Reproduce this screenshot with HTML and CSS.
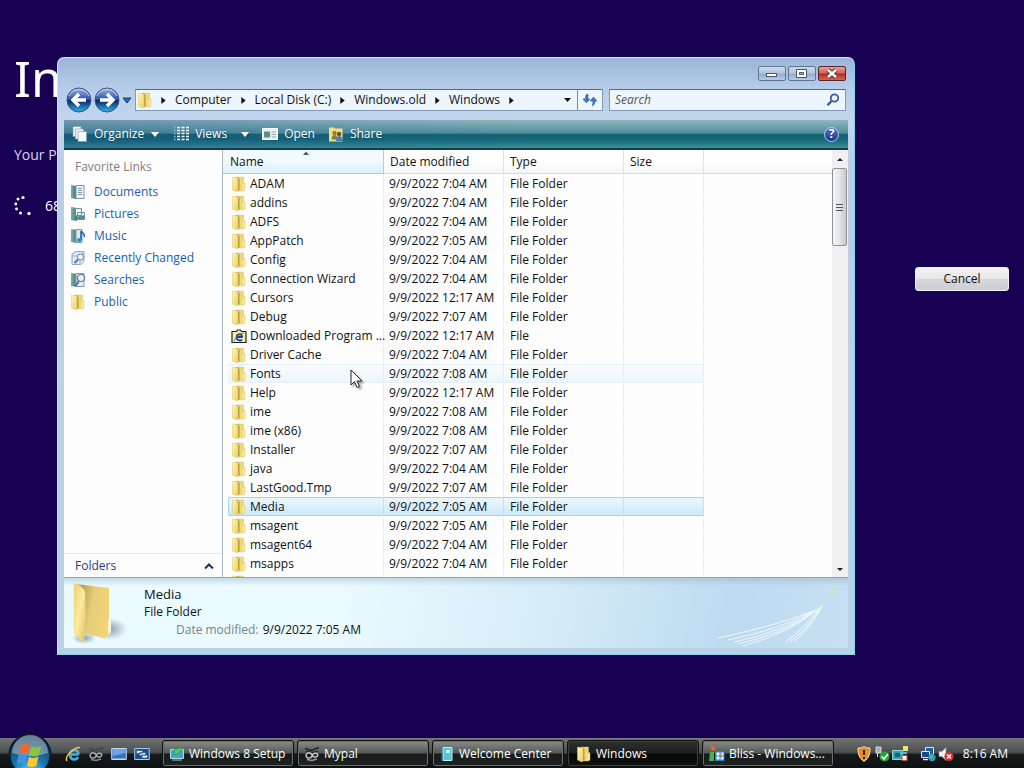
FILE: index.html
```html
<!DOCTYPE html>
<html lang="en">
<head>
    <meta charset="UTF-8">
    <title>Windows</title>
    <link rel="stylesheet" href="styles.css">
</head>
<body>
    <!-- Shared icons -->
    <svg class="sprite" aria-hidden="true">
        <defs>
            <linearGradient id="folderFront" x1="0" y1="0" x2="1" y2="1">
                <stop offset="0" stop-color="#fdf6bc"/>
                <stop offset="1" stop-color="#ead05c"/>
            </linearGradient>
            <linearGradient id="folderBack" x1="0" y1="0" x2="1" y2="0">
                <stop offset="0" stop-color="#bd9a34"/>
                <stop offset="0.5" stop-color="#f0db7c"/>
                <stop offset="1" stop-color="#e6cc5c"/>
            </linearGradient>
            <linearGradient id="orbBlue" x1="0" y1="0" x2="0" y2="1">
                <stop offset="0" stop-color="#9db4e4"/>
                <stop offset="0.48" stop-color="#2c53a8"/>
                <stop offset="0.5" stop-color="#06215f"/>
                <stop offset="1" stop-color="#2fb4f2"/>
            </linearGradient>
            <linearGradient id="book" x1="0" y1="0" x2="1" y2="0">
                <stop offset="0" stop-color="#7fb0a8"/>
                <stop offset="1" stop-color="#3c7875"/>
            </linearGradient>
        </defs>
        <symbol id="icon-folder" viewBox="0 0 16 16">
            <path d="M5 1h7.500v5l1.500 1v7l-1.500 1H5z" fill="url(#folderBack)" stroke="#dcc371" stroke-width=".4"/>
            <path d="M1.500 1L6.500 2l.8 5v7.500L6 16l-4.500-2z" fill="url(#folderFront)" stroke="#e0c867" stroke-width=".5"/>
            <path d="M11.500 7.500h2v6l-2 1z" fill="#f8edae"/>
            <path d="M7.800 3v11.500" stroke="#b9973a" stroke-width="1.200"/>
        </symbol>
        <symbol id="icon-ie" viewBox="0 0 16 16">
            <path d="M1 3.500h4.500l1-1.500h3l1 1.500h4.500v11H1z" fill="#f4f09a" stroke="#222" stroke-width="1.200"/>
            <path d="M11.500 9H5.500M11 11.500c-1 1.600-5 1.500-5.300-2C5.500 5.500 11 5 11.300 9" fill="none" stroke="#1d3f9a" stroke-width="1.800"/>
            <path d="M3.500 13C3.500 10 9 5 13 5" fill="none" stroke="#4d78c8"/>
        </symbol>
        <symbol id="icon-arrow" viewBox="0 0 5 8"><path d="M0 0l5 4-5 4z" fill="#111"/></symbol>
    </svg>

    <main class="desktop">
        <section class="setup">
            <h1 class="setup-title">In</h1>
            <p class="setup-text">Your P</p>
            <p class="setup-progress">
                <svg width="22" height="22" viewBox="0 0 22 22" fill="#fff">
                    <circle cx="9" cy="2.500" r="1.600"/><circle cx="4" cy="4" r="1.500"/><circle cx="1.800" cy="9" r="1.400"/>
                    <circle cx="2.500" cy="14" r="1.400"/><circle cx="6.500" cy="18" r="1.500"/><circle cx="15" cy="18.500" r="1.700"/>
                </svg>
                <span>68</span>
            </p>
            <div class="setup-actions">
                <button type="button" class="cancel">Cancel</button>
            </div>
        </section>

        <section class="window">
            <div class="caption">
                <button type="button" class="caption-btn" aria-label="Minimize">
                    <svg width="26" height="13" viewBox="0 0 26 13"><rect x="7.500" y="6.500" width="10" height="3" fill="#fff" stroke="#4b5570"/></svg>
                </button>
                <button type="button" class="caption-btn" aria-label="Maximize">
                    <svg width="26" height="13" viewBox="0 0 26 13"><path d="M7.500 2.500h10v8h-10zM10.500 5.500v2h4v-2z" fill="#fff" fill-rule="evenodd" stroke="#4b5570"/></svg>
                </button>
                <button type="button" class="caption-btn close" aria-label="Close">
                    <svg width="26" height="13" viewBox="0 0 26 13" fill="none"><path d="M9 3l8 7M17 3l-8 7" stroke="#5d2c34" stroke-width="4.500"/><path d="M9 3l8 7M17 3l-8 7" stroke="#fff" stroke-width="2.500"/></svg>
                </button>
            </div>

            <div class="nav">
                <div class="travel">
                    <button type="button" aria-label="Back">
                        <svg width="26" height="26" viewBox="0 0 26 26"><circle cx="13" cy="13" r="12" fill="url(#orbBlue)" stroke="#3a5484"/><path d="M3 9a11 11 0 0 1 20 0" fill="none" stroke="#d6e2f8" stroke-opacity=".8"/><path d="M20 13H8M13 7l-6 6 6 6" fill="none" stroke="#fff" stroke-width="3.400"/></svg>
                    </button>
                    <button type="button" aria-label="Forward">
                        <svg width="26" height="26" viewBox="0 0 26 26"><circle cx="13" cy="13" r="12" fill="url(#orbBlue)" stroke="#3a5484"/><path d="M3 9a11 11 0 0 1 20 0" fill="none" stroke="#d6e2f8" stroke-opacity=".8"/><path d="M6 13h12M13 7l6 6-6 6" fill="none" stroke="#fff" stroke-width="3.400"/></svg>
                    </button>
                    <button type="button" aria-label="Recent pages">
                        <svg width="10" height="7" viewBox="0 0 10 7"><path d="M1 1h8L5 6z" fill="#2d6db0" stroke="#1c3866"/></svg>
                    </button>
                </div>
                <div class="address">
                    <svg class="icon"><use href="#icon-folder"/></svg>
                    <svg class="sep"><use href="#icon-arrow"/></svg>
                    <a href="#">Computer</a>
                    <svg class="sep"><use href="#icon-arrow"/></svg>
                    <a href="#">Local Disk (C:)</a>
                    <svg class="sep"><use href="#icon-arrow"/></svg>
                    <a href="#">Windows.old</a>
                    <svg class="sep"><use href="#icon-arrow"/></svg>
                    <a href="#">Windows</a>
                    <svg class="sep"><use href="#icon-arrow"/></svg>
                    <button type="button" class="address-drop" aria-label="Previous locations">
                        <svg width="7" height="4" viewBox="0 0 7 4"><path d="M0 0h7L3.500 4z" fill="#111"/></svg>
                    </button>
                    <button type="button" class="refresh" aria-label="Refresh">
                        <svg width="16" height="16" viewBox="0 0 16 16" fill="#3e78b8" stroke="#24538a" stroke-width=".5"><path d="M4 3l2-1v5h2L4.500 11 1 7h2z"/><path d="M11.500 5L15 9h-2c0 3-1 4-3 5 1-1.500 1-3 .8-5H8z"/></svg>
                    </button>
                </div>
                <div class="search">
                    <input type="search" placeholder="Search" aria-label="Search">
                    <svg width="14" height="14" viewBox="0 0 14 14" fill="none" stroke="#3d5ba5"><circle cx="8.500" cy="5" r="3.700" stroke-width="1.800"/><path d="M5.500 8L1.500 12.300" stroke-width="2.400"/></svg>
                </div>
            </div>

            <div class="toolbar">
                <button type="button" class="tool organize">
                    <svg class="icon" viewBox="0 0 16 16" fill="#f4f8fa" stroke="#7fa2ae" stroke-width=".7"><path d="M1 .5h8v10H1z"/><path d="M3.500 3h8v10h-8z"/><path d="M6 5.500h8.500v10H6z"/></svg>
                    Organize
                    <svg class="drop" width="8" height="5" viewBox="0 0 8 5"><path d="M0 0h8L4 5z" fill="#fff"/></svg>
                </button>
                <button type="button" class="tool views">
                    <svg class="icon" viewBox="0 0 16 16"><path d="M4 1.500h3M8.500 1.500h3M13 1.500h3M4 4.500h3M8.500 4.500h3M13 4.500h3M4 7.500h3M8.500 7.500h3M13 7.500h3M4 10.500h3M8.500 10.500h3M13 10.500h3M4 13.500h3M8.500 13.500h3M13 13.500h3" stroke="#fff" stroke-width="1.600"/><path d="M1 1.500h1.500M1 4.500h1.500M1 7.500h1.500M1 10.500h1.500M1 13.500h1.500" stroke="#8ac0f0" stroke-width="1.600"/></svg>
                    Views
                    <svg class="drop" width="8" height="5" viewBox="0 0 8 5"><path d="M0 0h8L4 5z" fill="#fff"/></svg>
                </button>
                <button type="button" class="tool open">
                    <svg class="icon" viewBox="0 0 16 16"><path d="M.5 2.500h15v11H.5z" fill="#e9f1f3" stroke="#fff"/><path d="M2 5.500h6v6H2z" fill="#5f8d88"/><path d="M9.500 6h4.500M9.500 8.500h4.500M9.500 11h4.500" stroke="#93abb3"/></svg>
                    Open
                </button>
                <button type="button" class="tool share">
                    <svg class="icon" viewBox="0 0 16 16"><path d="M1 1.500h5l1 1h7.500v13H1z" fill="#f0de86"/><circle cx="6.500" cy="7" r="2.200" fill="#a8762e"/><path d="M3.500 13.500c0-3 1.500-4.500 3-4.500s3 1 3 4.500z" fill="#6a8a3b"/><circle cx="11" cy="8" r="2.200" fill="#7a4a20"/><path d="M8 15c.5-3 1.500-5 3-5s4 2 4 5z" fill="#4c7db3"/></svg>
                    Share
                </button>
                <button type="button" class="tool help" aria-label="Help">
                    <span>?</span>
                </button>
            </div>

            <div class="content">
                <aside class="sidebar">
                    <h2>Favorite Links</h2>
                    <ul>
                        <li><a href="#"><svg class="icon" viewBox="0 0 16 16"><path d="M1 1l5 1v13l-5-1z" fill="url(#book)"/><path d="M6 1.500h8v13H6z" fill="#eef3f6" stroke="#7d949e"/><path d="M8 4.500h4M8 6.500h4M8 8.500h4M8 10.500h4" stroke="#8296a8"/></svg>Documents</a></li>
                        <li><a href="#"><svg class="icon" viewBox="0 0 16 16"><path d="M1 1l6 1v13l-6-1z" fill="url(#book)"/><path d="M5.500 2.500h6v7h-6zM7.500 6.500h7v7h-7z" fill="#eef3f6" stroke="#71909e"/><path d="M8 11l2-2 2 1 2-1v4H8z" fill="#4a88a8"/></svg>Pictures</a></li>
                        <li><a href="#"><svg class="icon" viewBox="0 0 16 16"><path d="M1 1l6 1v13l-6-1z" fill="url(#book)"/><path d="M6 1.500h6v13H6z" fill="#dce9ed" stroke="#81999f"/><path d="M11 12V3c1 2 4 2 3.500 6" fill="none" stroke="#1766b8" stroke-width="1.600"/><ellipse cx="9.300" cy="12" rx="2.500" ry="2" fill="#2b8be0"/></svg>Music</a></li>
                        <li><a href="#"><svg class="icon" viewBox="0 0 16 16"><path d="M2 4l4-2.500h8V11l-3 3.500H2z" fill="#dce8f5" stroke="#8ba6c8"/><path d="M2 6h8v8M10 6l4-4" fill="none" stroke="#9db5d3"/><circle cx="10.500" cy="7" r="3" fill="#f5f9fd" stroke="#6686b6"/><path d="M8 9.500L4.500 13" stroke="#5274a8" stroke-width="1.800"/></svg>Recently Changed</a></li>
                        <li><a href="#"><svg class="icon" viewBox="0 0 16 16"><path d="M1 1l6 1v13l-6-1z" fill="url(#book)"/><path d="M6 1.500h8v13H6z" fill="#e6edf3" stroke="#8498a6"/><circle cx="11" cy="6" r="3.500" fill="#e8f1fb" stroke="#5d79a8" stroke-width="1.200"/><path d="M9 9l-3.500 5" stroke="#5571a2" stroke-width="2"/></svg>Searches</a></li>
                        <li><a href="#"><svg class="icon"><use href="#icon-folder"/></svg>Public</a></li>
                    </ul>
                    <button type="button" class="folders">
                        Folders
                        <svg width="10" height="6" viewBox="0 0 10 6"><path d="M1 5.500l4-4 4 4" fill="none" stroke="#1b2f66" stroke-width="2"/></svg>
                    </button>
                </aside>

                <div class="list">
                    <table>
                        <colgroup>
                            <col class="col-gutter"><col class="col-name"><col class="col-date"><col class="col-type"><col class="col-size"><col>
                        </colgroup>
                        <thead>
                            <tr>
                                <th colspan="2" class="sorted">Name<svg class="sort-mark" width="6" height="4" viewBox="0 0 6 4"><path d="M0 4l3-3.500L6 4z" fill="#4d5d68"/></svg></th>
                                <th>Date modified</th><th>Type</th><th>Size</th><th class="rest"></th>
                            </tr>
                        </thead>
                        <tbody id="files"></tbody>
                    </table>
                </div>

                <div class="scrollbar">
                    <button type="button" aria-label="Scroll up"><svg width="6" height="3" viewBox="0 0 6 3"><path d="M0 3l3-3 3 3z" fill="#222"/></svg></button>
                    <div class="thumb"><i></i><i></i><i></i></div>
                    <button type="button" class="down" aria-label="Scroll down"><svg width="6" height="3" viewBox="0 0 6 3"><path d="M0 0h6L3 3z" fill="#222"/></svg></button>
                </div>
            </div>

            <footer class="details">
                <svg class="details-icon" width="56" height="64" viewBox="0 0 56 64">
                    <defs>
                        <radialGradient id="softShadow"><stop offset="0" stop-color="#6f8494" stop-opacity=".8"/><stop offset="1" stop-color="#6f8494" stop-opacity="0"/></radialGradient>
                        <linearGradient id="bigBack" x1="0" y1="0" x2="1" y2=".3"><stop offset=".2" stop-color="#b7a25a"/><stop offset=".55" stop-color="#e6cd78"/><stop offset="1" stop-color="#efd576"/></linearGradient>
                        <linearGradient id="bigFront" x1="0" y1="0" x2="1" y2="1"><stop offset="0" stop-color="#e9cf73"/><stop offset=".5" stop-color="#fbeba2"/><stop offset="1" stop-color="#e3bf56"/></linearGradient>
                    </defs>
                    <ellipse cx="37" cy="47" rx="18" ry="11" fill="url(#softShadow)"/>
                    <ellipse cx="12" cy="56" rx="12" ry="6" fill="url(#softShadow)"/>
                    <path d="M4 2l33 4v47l-4 3-24-5z" fill="url(#bigBack)"/>
                    <path d="M36 38l3-1v13l-3 3z" fill="#fbf6d8"/>
                    <path d="M2 1c5 2 11 6 11 10v27l-1 3v20L2 51z" fill="url(#bigFront)" stroke="#f3dd8c" stroke-width=".6"/>
                </svg>
                <div class="details-text">
                    <p class="details-name">Media</p>
                    <p>File Folder</p>
                    <p class="details-date"><span>Date modified:</span> 9/9/2022 7:05 AM</p>
                </div>
                <svg class="details-art" width="130" height="68" viewBox="0 0 130 68" fill="none">
                    <path d="M4 58Q60 46 100 31M14 60Q65 50 102 30M20 62Q70 52 104 29M24 64Q74 53 106 28M28 66Q76 54 108 26" stroke="#fff" stroke-opacity=".75"/>
                    <path d="M72 62Q88 50 104 30M76 62Q92 50 106 29M80 62Q96 48 108 27" stroke="#fff" stroke-opacity=".8"/>
                    <path d="M98 34l12-11M116 12l7-4-2 4-5 4z" stroke="#c8f0a8" stroke-opacity=".8"/>
                </svg>
            </footer>
        </section>

        <svg class="cursor" width="14" height="20" viewBox="0 0 14 20"><path d="M1 1v15l3.500-3.500L7 18.500l2.500-1L7 12h5z" fill="#fff" stroke="#222"/></svg>
    </main>

    <nav class="taskbar">
        <button type="button" class="start" aria-label="Start">
            <svg width="44" height="44" viewBox="0 0 44 44">
                <defs><radialGradient id="startOrb" cx=".5" cy=".95" r=".9"><stop offset="0" stop-color="#5fe0ff"/><stop offset=".45" stop-color="#1a78ad"/><stop offset="1" stop-color="#12324e"/></radialGradient></defs>
                <circle cx="22" cy="22" r="20.500" fill="url(#startOrb)" stroke="#0b1a2c" stroke-width="2"/>
                <path d="M4 20a18 18 0 0 1 36 0q-18 6-36 0z" fill="#c3d0da" opacity=".5"/>
                <path d="M13 12q5-3 9 0l-2 9q-4-3-9 0z" fill="#ee6a2c"/>
                <path d="M23.500 13q4 3 9.500 0l-2 9q-5 3-9.500 0z" fill="#8cc63c"/>
                <path d="M10.500 22.500q5-3 9 0l-2 9q-4-3-9 0z" fill="#3f93e0"/>
                <path d="M21 23.500q4 3 9.500 0l-2 9q-5 3-9.500 0z" fill="#fbc92f"/>
            </svg>
        </button>
        <div class="quick">
            <button type="button" aria-label="Internet Explorer"><svg class="icon" viewBox="0 0 16 16" fill="none"><path d="M13.500 8.500H5M13 11c-2 4-8.500 3-8-3 .5-5.500 8.500-5 8.500.5" stroke="#3eb0f2" stroke-width="2.600"/><path d="M2 15C-1 11 9 1 15 1.500" stroke="#f5c534" stroke-width="1.500"/></svg></button>
            <button type="button" aria-label="Mypal"><svg class="icon" viewBox="0 0 16 16" fill="none"><path d="M1 2.500l6 2 8-3M2 5.500l6 1 6-1" stroke="#3c4346" stroke-width="1.600"/><path d="M2 9c1-3 5-3 6 0s5 3 6 0M2 9c0 4 5 4 6 1s5-4 6-1" stroke="#a9b0b2" stroke-width="1.400"/><path d="M3 13.500l5 1 5-1.500" stroke="#83898c" stroke-width="1.500"/></svg></button>
            <button type="button" aria-label="Show desktop"><svg class="icon" viewBox="0 0 16 16"><path d="M.7 2.500h14.600v11H.7z" fill="#3b6fc4" stroke="#c6d8ec"/><path d="M1.500 3h13v4l-13 3z" fill="#6fa3e8"/><path d="M1.500 12.500h13" stroke="#7ba7cb"/></svg></button>
            <button type="button" aria-label="Switch windows"><svg class="icon" viewBox="0 0 16 16"><path d="M.7 2.500h14.600v11H.7z" fill="#1d4d91" stroke="#a9c8ea"/><path d="M2.500 4.500h6v3h-6zM5.500 6.500h6v3h-6zM8 9h5.500v3H8z" fill="#e6f0fa" stroke="#2a5790" stroke-width=".7"/></svg></button>
        </div>
        <div class="tasks">
            <button type="button" class="task"><svg class="icon" viewBox="0 0 16 16"><path d="M1.500 3.500h13v9h-13z" fill="#4f9fc4" stroke="#a5dceb"/><path d="M3 14h10" stroke="#9cc4d0"/><path d="M12 1L7 4 6 2.500 4.500 8.500 11 8 9.500 6.500 13 3z" fill="#3ed668" stroke="#178a3f" stroke-width=".6"/></svg><span>Windows 8 Setup</span></button>
            <button type="button" class="task"><svg class="icon" viewBox="0 0 16 16" fill="none"><path d="M1 2.500l6 2 8-3M2 5.500l6 1 6-1" stroke="#20282c" stroke-width="1.600"/><path d="M2 9c1-3 5-3 6 0s5 3 6 0M2 9c0 4 5 4 6 1s5-4 6-1" stroke="#c9cfd1" stroke-width="1.400"/><path d="M3 13.500l5 1 5-1.500" stroke="#969c9f" stroke-width="1.500"/></svg><span>Mypal</span></button>
            <button type="button" class="task"><svg class="icon" viewBox="0 0 16 16"><path d="M4 1.500h9v13H4z" fill="#55c5d8" stroke="#b9eef4"/><path d="M7 4h4v3H7z" fill="#c6f4f8"/><path d="M3 2v13" stroke="#2c8e9e"/></svg><span>Welcome Center</span></button>
            <button type="button" class="task active"><svg class="icon"><use href="#icon-folder"/></svg><span>Windows</span></button>
            <button type="button" class="task"><svg class="icon" viewBox="0 0 16 16"><circle cx="4" cy="2.500" r="2.300" fill="#ed6430"/><path d="M1 6h4v9H0z" fill="#49ae58"/><path d="M6 5h9.500v10H6z" fill="#1f83cd"/><path d="M7.500 6.500h3v3h-3zM11.500 6.500h3v3h-3zM7.500 10.500h3v3h-3zM11.500 10.500h3v3h-3z" fill="#fff"/><path d="M12 7v5" stroke="#ec762f" stroke-width="1.500"/></svg><span>Bliss - Windows...</span></button>
        </div>
        <div class="tray">
            <svg class="icon" viewBox="0 0 16 16"><path d="M8 .5c2 1.500 4 1.500 6 1.500 0 6-1 10-6 13.500C3 12 2 8 2 2c2 0 4 0 6-1.500z" fill="#e88d24" stroke="#f4e4c6"/><path d="M8 4v5M8 11v2" stroke="#34220f" stroke-width="2"/></svg>
            <svg class="icon" viewBox="0 0 16 16"><path d="M2 1h5v6H2zM3.500 7v4" fill="#a8adb0" stroke="#d7dadc"/><circle cx="10.500" cy="10.500" r="5" fill="#2ca23a"/><path d="M7.500 10.500l2.500 2.500 4-5" fill="none" stroke="#fff" stroke-width="1.700"/></svg>
            <svg class="icon" viewBox="0 0 16 16"><path d="M.5 4.500h10v9H.5z" fill="#32a2a6" stroke="#93dadb"/><path d="M3 7h5v4H3z" fill="#14657a"/><path d="M11 0h5v5h-5z" fill="#f5e55a"/><path d="M10 9.500h5v5h-5z" fill="#f5f5f5" stroke="#c94b3c"/><path d="M8 6h7v2H8z" fill="#58b4e0"/></svg>
            <svg class="icon network" viewBox="0 0 16 16"><path d="M5.500 1.500h8v7h-8z" fill="#1f5e9e" stroke="#d4e5f2"/><path d="M1.500 5.500h8v6h-8z" fill="#164d88" stroke="#d4e5f2"/><path d="M3 13.500h5" stroke="#d4e5f2" stroke-width="1.500"/><circle cx="12" cy="11.500" r="3.700" fill="#2b91d8"/><path d="M10 10l2-1.500 1 2-1 3-2-1z" fill="#5cc25d"/></svg>
            <svg class="icon" viewBox="0 0 16 16"><path d="M1 5.500h3L8 1.500v13L4 10.500H1z" fill="#eef1f3" stroke="#93999e" stroke-width=".6"/><circle cx="11" cy="10.500" r="4.600" fill="#db2b27"/><path d="M9 8.500l4 4M13 8.500l-4 4" stroke="#fff" stroke-width="1.700"/></svg>
            <time>8:16 AM</time>
        </div>
    </nav>

    <script>
        const files = [
            ['ADAM', '7:04 AM'],
            ['addins', '7:04 AM'],
            ['ADFS', '7:04 AM'],
            ['AppPatch', '7:05 AM'],
            ['Config', '7:04 AM'],
            ['Connection Wizard', '7:04 AM'],
            ['Cursors', '12:17 AM'],
            ['Debug', '7:07 AM'],
            ['Downloaded Program ...', '12:17 AM', 'File'],
            ['Driver Cache', '7:04 AM'],
            ['Fonts', '7:08 AM'],
            ['Help', '12:17 AM'],
            ['ime', '7:08 AM'],
            ['ime (x86)', '7:08 AM'],
            ['Installer', '7:07 AM'],
            ['java', '7:04 AM'],
            ['LastGood.Tmp', '7:07 AM'],
            ['Media', '7:05 AM'],
            ['msagent', '7:05 AM'],
            ['msagent64', '7:04 AM'],
            ['msapps', '7:04 AM']
        ];
        const rowState = { Fonts: 'hover', Media: 'selected' };

        const body = document.getElementById('files');
        files.forEach(([name, time, type = 'File Folder']) => {
            const row = document.createElement('tr');
            row.className = rowState[name] || '';
            const icon = type === 'File' ? 'icon-ie' : 'icon-folder';
            row.innerHTML = `
                <td></td>
                <td class="name"><svg class="icon"><use href="#${icon}"/></svg>${name}</td>
                <td>9/9/2022 ${time}</td>
                <td>${type}</td>
                <td></td>
                <td></td>
            `;
            body.appendChild(row);
        });

        // Last row is cut off by the bottom of the list
        const last = document.createElement('tr');
        last.innerHTML = '<td></td><td class="name"><svg class="icon"><use href="#icon-folder"/></svg></td><td></td><td></td><td></td><td></td>';
        body.appendChild(last);
    </script>
</body>
</html>
```

FILE: styles.css
```css
* {
    box-sizing: border-box;
}
body {
    margin: 0;
    height: 100vh;
    display: flex;
    flex-direction: column;
    background: #180052;
    font-family: "Open Sans", "Noto Sans", sans-serif;
    font-size: 12px;
    line-height: 16px;
    color: #111;
    overflow: hidden;
}
h1, h2, p, ul {
    margin: 0;
    padding: 0;
    font-weight: normal;
}
ul {
    list-style: none;
}
button {
    padding: 0;
    border: 0;
    background: none;
    font: inherit;
    color: inherit;
}
a {
    color: inherit;
    text-decoration: none;
}
svg {
    display: block;
    flex: none;
}
.icon {
    width: 16px;
    height: 16px;
}
.sprite {
    position: absolute;
    width: 0;
    height: 0;
}
.desktop {
    position: relative;
    flex: 1;
    min-height: 0;
}

/* Setup screen behind the window */
.setup {
    padding: 47px 15px 0 14px;
    color: #fff;
}
.setup-title {
    font-family: "Noto Sans", sans-serif;
    font-size: 50px;
    line-height: 62px;
}
.setup-text {
    margin-top: 37px;
    font-size: 14px;
    line-height: 18px;
    color: #dcd4ee;
}
.setup-progress {
    display: flex;
    align-items: center;
    gap: 9px;
    margin-top: 31px;
    font-size: 14px;
    line-height: 22px;
}
.setup-actions {
    display: flex;
    justify-content: flex-end;
    margin-top: 50px;
}
.cancel {
    width: 94px;
    height: 24px;
    border: 1px solid #f4f4f8;
    border-radius: 3px;
    background: linear-gradient(#f3f3f3, #e6e6e9 48%, #d6d6dc 52%, #cdcdd5);
    color: #111;
}

/* Explorer window */
.window {
    position: absolute;
    left: 57px;
    top: 57px;
    width: 798px;
    height: 598px;
    display: flex;
    flex-direction: column;
    padding: 8px 6px 6px;
    border: 1px solid #cfe4f5;
    border-right-color: #7fd0ee;
    border-bottom-color: #8fd0ee;
    border-radius: 7px 7px 0 0;
    background: linear-gradient(#9bb5d6, #b4cbe8 28px, #c4d6ed 64px, #b9cde4 110px, #bcd3e4 300px, #b9d2e6);
}
.caption {
    display: flex;
    justify-content: flex-end;
    gap: 2px;
    padding-right: 2px;
}
.caption-btn {
    width: 28px;
    height: 15px;
    overflow: hidden;
    border: 1px solid #5f7694;
    border-radius: 2px;
    background: linear-gradient(#cad9ec, #b2c6df 48%, #93abc9 52%, #b5cde8);
}
.caption-btn.close {
    border-color: #5a2430;
    background: linear-gradient(#e4a095, #cf6355 48%, #b52a20 52%, #d4674e);
}
.nav {
    display: flex;
    align-items: center;
    height: 22px;
    margin: 8px 0 9px;
}
.travel {
    display: flex;
    align-items: center;
    gap: 2px;
    width: 71px;
    padding-left: 2px;
}
.address, .search {
    display: flex;
    align-items: center;
    height: 22px;
    border: 1px solid #8299b8;
    border-top-color: #536a88;
    background: #edf5fd;
}
.address {
    flex: 1;
    padding-left: 1px;
}
.address a {
    margin: 0 9px;
}
.sep {
    width: 5px;
    height: 7px;
}
.icon + .sep {
    margin-left: 8px;
}
.address-drop {
    margin-left: auto;
    padding: 6px;
}
.refresh {
    display: flex;
    align-items: center;
    justify-content: center;
    width: 25px;
    height: 20px;
    border-left: 1px solid #7288a8;
}
.search {
    width: 237px;
    margin: 0 2px 0 6px;
    padding: 0 5px;
}
.search input {
    flex: 1;
    min-width: 0;
    padding: 0;
    border: 0;
    outline: 0;
    background: none;
    font: inherit;
}
.search input::placeholder {
    color: #555;
    font-style: italic;
}
.toolbar {
    display: flex;
    align-items: center;
    height: 30px;
    padding: 0 9px 0 8px;
    border-bottom: 2px solid #123c54;
    background:
        linear-gradient(90deg, rgba(20, 60, 130, 0.25), transparent 60%),
        linear-gradient(#8fb6c0, #4f919c 46%, #156374 52%, #17697a 72%, #3a9196);
    color: #fff;
}
.tool {
    display: flex;
    align-items: center;
    gap: 6px;
    text-shadow: 0 1px 1px #134a5e;
}
.organize .drop {
    margin-left: 1px;
}
.views {
    margin-left: 14px;
}
.views .drop {
    margin-left: 8px;
}
.open, .share {
    margin-left: 13px;
}
.help {
    justify-content: center;
    width: 15px;
    height: 15px;
    margin-left: auto;
    border: 1px solid #b9cdf0;
    border-radius: 50%;
    background: linear-gradient(#5a78cf, #1a2d92);
    font-weight: bold;
    line-height: 12px;
}
.content {
    display: flex;
    flex: 1;
    min-height: 0;
    background: #fdfdfd;
}
.sidebar {
    display: flex;
    flex-direction: column;
    width: 159px;
    border-right: 1px solid #a8b8c4;
}
.sidebar h2 {
    padding: 9px 11px 6px;
    font-size: 12px;
    line-height: 16px;
    color: #808080;
}
.sidebar li a {
    display: flex;
    align-items: center;
    gap: 8px;
    height: 22px;
    padding-left: 6px;
    color: #1b60ad;
}
.folders {
    display: flex;
    align-items: center;
    justify-content: space-between;
    height: 24px;
    margin-top: auto;
    padding: 0 8px 0 11px;
    border-top: 1px solid #e2e8ee;
    color: #1e3c8c;
}
.list {
    flex: 1;
    min-width: 0;
    overflow: hidden;
}
table {
    width: 100%;
    table-layout: fixed;
    border-spacing: 0;
}
.col-gutter {
    width: 5px;
}
.col-name {
    width: 156px;
}
.col-date, .col-type {
    width: 120px;
}
.col-size {
    width: 80px;
}
th {
    position: relative;
    height: 24px;
    padding: 0 6px;
    border-right: 1px solid #dfe3e6;
    border-bottom: 1px solid #d8dcdf;
    background: linear-gradient(#fff 50%, #f4f5f6);
    font-weight: normal;
    text-align: left;
}
th.sorted {
    padding-left: 7px;
    border-color: #a9cfe0;
    background: linear-gradient(#f3fafe 45%, #dcf0fa);
}
th.rest, td:last-child {
    border-right: 0;
}
.sort-mark {
    position: absolute;
    left: 50%;
    top: 1px;
}
td {
    height: 19px;
    padding: 0 5px 0 6px;
    border: solid transparent;
    border-width: 1px 1px 1px 0;
    border-right-color: #ededed;
    line-height: 16px;
    white-space: nowrap;
}
td:nth-child(1) {
    padding: 0;
    border-right: 0;
}
td:nth-child(3) {
    padding-left: 5px;
}
td.name {
    padding: 0 0 0 3px;
}
.name svg {
    display: inline-block;
    margin-right: 3px;
    vertical-align: top;
}
.hover td:nth-child(n+2):nth-child(-n+5) {
    border-color: #e3f0f7;
    background: linear-gradient(#f9fcfe, #edf6fb);
}
.selected td:nth-child(n+2):nth-child(-n+5) {
    border-color: #a3d5eb;
    border-right-color: #c3e3f2;
    background: linear-gradient(#eaf7fe, #cdeafa);
}
.selected td.name {
    border-left: 1px solid #a3d5eb;
    border-radius: 2px 0 0 2px;
    padding-left: 2px;
}
.scrollbar {
    display: flex;
    flex-direction: column;
    width: 16px;
    background: #f0f0f0;
}
.scrollbar button {
    display: flex;
    align-items: center;
    justify-content: center;
    height: 18px;
}
.scrollbar .down {
    height: 16px;
    margin-top: auto;
}
.thumb {
    display: flex;
    flex-direction: column;
    align-items: center;
    justify-content: center;
    gap: 2px;
    height: 78px;
    margin-right: 1px;
    border: 1px solid #8f9399;
    border-radius: 2px;
    background: linear-gradient(90deg, #f6f6f6, #e4e5e7 50%, #c6c8cc);
}
.thumb i {
    width: 7px;
    height: 1px;
    background: #555;
}
.details {
    position: relative;
    display: flex;
    height: 71px;
    padding: 0 8px;
    border-top: 1px solid #92a3ae;
    background: linear-gradient(rgba(140, 170, 190, 0.4), transparent 8px), linear-gradient(100deg, #eafaff 35%, #d5ecf7 62%, #bcdaf0 85%, #c8e0f3);
}
.details-icon {
    margin-top: 4px;
}
.details-text {
    padding: 7px 0 0 16px;
    line-height: 18px;
}
.details-name {
    font-size: 13px;
}
.details-date {
    padding-left: 32px;
}
.details-date span {
    margin-right: 1px;
    color: #75838b;
}
.details-art {
    position: absolute;
    right: 4px;
    bottom: 0;
}
.cursor {
    position: absolute;
    left: 350px;
    top: 369px;
    filter: drop-shadow(2px 2px 1px rgba(0, 0, 0, 0.35));
}

/* Taskbar */
.taskbar {
    position: relative;
    display: flex;
    align-items: center;
    height: 30px;
    padding: 0 16px 0 65px;
    border-top: 1px solid #77787a;
    background: linear-gradient(#6d706f, #4c4f4f 46%, #16191a 54%, #0e1111);
    color: #fff;
}
.start {
    position: absolute;
    left: 8px;
    top: -6px;
}
.quick {
    display: flex;
    gap: 7px;
}
.tasks {
    display: flex;
    gap: 3px;
    margin-left: 12px;
}
.task {
    display: flex;
    align-items: center;
    gap: 4px;
    width: 132px;
    height: 27px;
    padding: 0 6px;
    border: 1px solid #101212;
    border-radius: 3px;
    background: linear-gradient(#8a8d8a, #565b57 46%, #171b1b 54%, #1f2423);
    box-shadow: inset 0 0 0 1px #6a6e6c;
    text-align: left;
    white-space: nowrap;
}
.task.active {
    padding-left: 8px;
    background: linear-gradient(#2e312f, #1d201f 46%, #060808 54%, #101211);
    box-shadow: inset 0 0 0 1px #3c403e;
}
.tray {
    display: flex;
    align-items: center;
    gap: 2px;
    margin-left: auto;
}
.network {
    margin-left: 10px;
}
.tray time {
    margin-left: 7px;
}
```
